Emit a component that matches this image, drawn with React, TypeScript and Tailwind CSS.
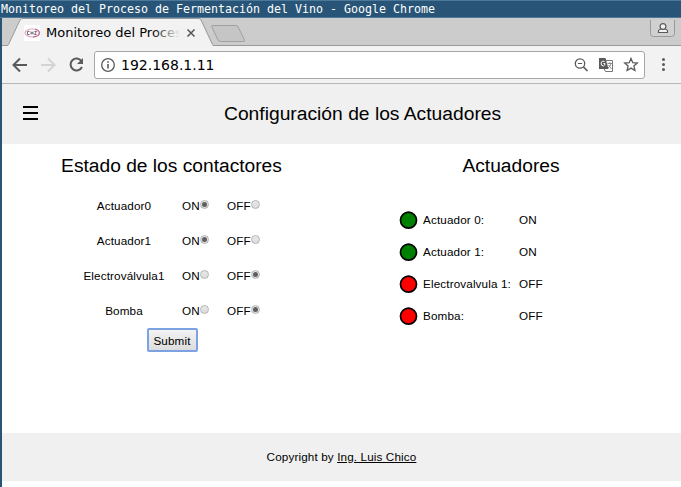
import React from 'react';

const contactors = [
  { name: 'Actuador0', on: true },
  { name: 'Actuador1', on: true },
  { name: 'Electroválvula1', on: false },
  { name: 'Bomba', on: false },
];

const actuators = [
  { name: 'Actuador 0:', on: true },
  { name: 'Actuador 1:', on: true },
  { name: 'Electrovalvula 1:', on: false },
  { name: 'Bomba:', on: false },
];

function Radio({ checked }: { checked: boolean }) {
  return (
    <span
      role="radio"
      aria-checked={checked}
      className="-mt-[3px] flex h-[9px] w-[9px] shrink-0 items-center justify-center rounded-full border border-[#b4b4b4] bg-linear-to-b from-[#e9e9e9] to-[#dcdcdc]"
    >
      {checked && <span className="h-[5px] w-[5px] rounded-full bg-[#606060]" />}
    </span>
  );
}

function TabStrip() {
  return (
    <div className="relative h-[28px] bg-[#cccccc]">
      <svg className="absolute inset-0" width="679" height="28" viewBox="0 0 679 28" fill="none">
        <path d="M0 27.5H679" stroke="#999" />
        <path d="M0 28H5.5L18 2Q19 0.5 21 0.5H196Q198 0.5 199 2L211 28Z" fill="#f2f2f2" />
        <path d="M0 27.5H5Q6 27.5 6.5 26.5L18 2Q19 0.5 21 0.5H196Q198 0.5 199 2L210.500 26.500Q211 27.500 212 27.500" stroke="#999" />
        <path d="M211 7.500H234Q235.500 7.500 236.200 9L242.500 22Q243.200 23.500 241.500 23.500H219Q217 23.500 216 22L209.800 9Q209.200 7.500 211 7.500Z" fill="#c5c5c5" stroke="#a0a0a0" />
        <rect x="22" y="7" width="16" height="16" fill="#fff" />
        <ellipse cx="30" cy="15" rx="7" ry="4" stroke="#dfa8c4" strokeWidth="1.200" />
        <path d="M33 11Q39 12 37 17Q35 19 31 19" stroke="#b85d89" />
        <path d="M27.500 13.500H25.500V16.500H27.500M29 13.500V16.500M29 15H31M31 13.500V16.500M32.500 13.500H34.500L32.500 16.500H34.500" stroke="#554653" strokeWidth=".8" />
        <path d="M185.500 11.500L192.500 18.500M192.500 11.500L185.500 18.500" stroke="#5a5a5a" strokeWidth="1.600" />
        <path d="M648.500 2V15.500Q648.500 18.500 651.500 18.500H669.500Q672.500 18.500 672.500 15.500V2" fill="#d0d0d0" stroke="#999" />
        <path d="M656.500 14.500V13Q656.500 11 661 11Q665.500 11 665.500 13V14.500Z" fill="#f3f3f3" stroke="#5a5a5a" strokeWidth="1.200" />
        <circle cx="661" cy="8.500" r="2.900" fill="#f3f3f3" stroke="#5a5a5a" strokeWidth="1.200" />
      </svg>
      <div className="absolute left-[44px] top-[5px] w-[134px] overflow-hidden whitespace-nowrap font-['DejaVu_Sans',sans-serif] text-[13px] leading-[20px] text-black">
        Monitoreo del Proceso
        <span className="absolute inset-y-0 right-0 w-[28px] bg-linear-to-r from-transparent to-[#f2f2f2]" />
      </div>
    </div>
  );
}

function Toolbar() {
  return (
    <div className="flex h-[38px] items-center border-b border-[#b6b6b6] bg-[#f2f2f2]">
      <svg className="mr-[-1px] shrink-0" width="93" height="37" viewBox="0 0 93 37" fill="none" strokeWidth="2">
        <path d="M25 19H12M18 12.500L11.500 19L18 25.500" stroke="#5a5a5a" />
        <path d="M39 19H52M46 12.500L52.500 19L46 25.500" stroke="#d4d4d4" />
        <path d="M79.500 15A6 6 0 1 0 80 21" stroke="#5a5a5a" />
        <path d="M81 12V18H75Z" fill="#5a5a5a" />
      </svg>
      <div className="flex h-[28px] w-[551px] shrink-0 items-center rounded-[3px] border border-[#a6a6a6] bg-white">
        <svg className="ml-[6px] shrink-0" width="14" height="14" viewBox="0 0 14 14" fill="none" stroke="#5a5a5a">
          <circle cx="7" cy="7" r="6.300" strokeWidth="1.300" />
          <path d="M7 6V10.500M7 3.300V4.800" strokeWidth="1.600" />
        </svg>
        <span className="ml-[6px] grow font-['DejaVu_Sans',sans-serif] text-[14px] leading-[20px] text-black">192.168.1.11</span>
        <svg className="mr-[5px] shrink-0" width="65" height="20" viewBox="0 0 65 20" fill="none" stroke="#5a5a5a">
          <circle cx="6" cy="8.500" r="4.700" strokeWidth="1.300" />
          <path d="M9.500 12L13.500 16" strokeWidth="1.700" />
          <path d="M3.800 8.500H8.200" />
          <path d="M32 5.500H38.500V16.500H31.500L30 13.500" fill="#fff" stroke="#777" />
          <path d="M25 3H31.500L34.500 14H25Z" fill="#5a5a5a" stroke="none" />
          <path d="M30.500 6.500Q28 5 27 8Q27 11 29.500 11Q31 10.500 31 8.500H29.500" stroke="#fff" />
          <path d="M33.500 8.500H38M35.800 7V8.500M37 8.500Q36 12 34 13M34.500 10L37.500 14" stroke="#777" strokeWidth=".8" />
          <path d="M57 3.500L58.800 7.700L63.300 8.100L59.900 11L60.900 15.500L57 13.100L53.100 15.500L54.100 11L50.700 8.100L55.200 7.700Z" strokeWidth="1.300" />
        </svg>
      </div>
      <div className="ml-[14px] flex w-[8px] shrink-0 flex-col items-center gap-[2px]">
        <i className="size-[3px] rounded-full bg-[#5a5a5a]" />
        <i className="size-[3px] rounded-full bg-[#5a5a5a]" />
        <i className="size-[3px] rounded-full bg-[#5a5a5a]" />
      </div>
    </div>
  );
}

export default function App() {
  return (
    <div className="flex h-[487px] w-[681px] flex-col overflow-hidden bg-[#285577] font-['Liberation_Sans',Arial,sans-serif] text-black">
      <div className="h-[18px] shrink-0 whitespace-pre border-y border-[#4c7899] pl-[1px] font-['DejaVu_Sans_Mono',monospace] text-[11.630px] leading-[16px] text-white">
        Monitoreo del Proceso de Fermentación del Vino - Google Chrome
      </div>
      <div className="ml-[2px] flex grow flex-col bg-white">
        <TabStrip />
        <Toolbar />
        <header className="flex h-[60px] items-center bg-[#f0f0f0]">
          <button className="ml-[21px] mt-[-2px] flex w-[15px] flex-col gap-[4px]" aria-label="Menú">
            <i className="h-[2px] w-full bg-black" />
            <i className="h-[2px] w-full bg-black" />
            <i className="h-[2px] w-full bg-black" />
          </button>
          <h1 className="ml-[186px] text-[19.250px] leading-[28px]">Configuración de los Actuadores</h1>
        </header>
        <main className="flex h-[289px]">
          <section className="w-[339px]">
            <h2 className="mt-[8px] text-center text-[19.200px] leading-[28px]">Estado de los contactores</h2>
            <div className="mt-[8px] text-[11.700px] leading-[17px] tracking-[0.13px]">
              {contactors.map((c) => (
                <div key={c.name} className="flex h-[35px] items-center">
                  <span className="ml-[72px] w-[100px] text-center">{c.name}</span>
                  <label className="ml-[8px] flex w-[45px] items-center">ON<Radio checked={c.on} /></label>
                  <label className="flex items-center">OFF<Radio checked={!c.on} /></label>
                </div>
              ))}
            </div>
            <button className="ml-[144.500px] block h-[24px] w-[51px] rounded-[2px] border-2 border-[#7da2e2] bg-linear-to-b from-[#f3f3f3] to-[#dddddd] text-[11.700px] leading-[17px] tracking-[0.13px]">
              Submit
            </button>
          </section>
          <section className="w-[340px]">
            <h2 className="mt-[8px] text-center text-[19.200px] leading-[28px]">Actuadores</h2>
            <div className="mt-[24px] text-[11.700px] leading-[18px] tracking-[0.13px]">
              {actuators.map((a) => (
                <div key={a.name} className="flex h-[32px] items-center">
                  <svg className="ml-[58px]" width="19" height="19" viewBox="0 0 19 19">
                    <circle cx="9.500" cy="9.200" r="8" fill={a.on ? '#008000' : '#ff0000'} stroke="#000" strokeWidth="1.700" />
                  </svg>
                  <span className="ml-[5px] w-[96px]">{a.name}</span>
                  <span>{a.on ? 'ON' : 'OFF'}</span>
                </div>
              ))}
            </div>
          </section>
        </main>
        <footer className="flex h-[48px] items-center justify-center bg-[#f0f0f0] text-[11.700px] leading-[18px] tracking-[0.13px]">
          <p>Copyright by <a className="underline">Ing. Luis Chico</a></p>
        </footer>
      </div>
    </div>
  );
}
